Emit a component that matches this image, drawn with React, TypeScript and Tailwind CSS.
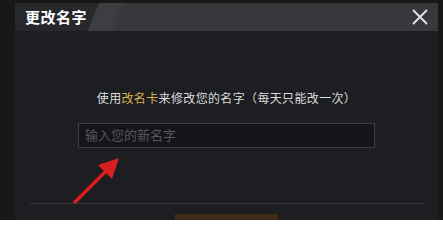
import React from "react";

const cjk = { fontFamily: '"Noto Sans CJK SC", "Noto Sans", sans-serif' };

export default function App() {
  return (
    <div className="relative w-[443px] h-[220px] overflow-hidden bg-[#181818]" style={cjk}>
      <div className="ml-[15px] mt-[3px] w-[423px] h-[240px] flex flex-col bg-[#1d1e22]">
        {/* header */}
        <div className="h-[29px] flex items-center justify-between pl-[10px] pr-[10px] bg-[linear-gradient(112deg,#26282c_0px,#26282c_78px,#3c3e42_78px,#3c3e42_100px,#36383c_100px)]">
          <span className="text-[15px] font-bold text-white tracking-[0.5px]">更改名字</span>
          <svg width="16" height="16" viewBox="0 0 16 16" className="text-[#e6e6e6]">
            <path d="M1.5 1.5L14.5 14.5M14.5 1.5L1.5 14.5" stroke="currentColor" strokeWidth="1.8" strokeLinecap="round" />
          </svg>
        </div>

        {/* body */}
        <div className="flex flex-col items-center pt-[59px]">
          <p className="text-[12px] leading-[16px] text-[#dcdcdc] tracking-[0.35px]">
            使用<span className="text-[#d9b24c]">改名卡</span>来修改您的名字（每天只能改一次）
          </p>
          <div className="mt-[17px] w-[297px] h-[25px] flex items-center px-[6px] bg-[#141519] border border-[#3d3e42]">
            <span className="text-[13px] text-[#55575b]">输入您的新名字</span>
          </div>
        </div>

        <div className="mt-[55px] mx-[15px] h-[2px] bg-[#34363a]" />
        <div className="mt-[10px] self-center w-[103px] h-[30px] bg-[#3e2b18]" />
      </div>

      {/* red annotation arrow */}
      <svg className="absolute left-0 top-0" width="443" height="220" viewBox="0 0 443 220">
        <line x1="75" y1="202" x2="109" y2="168" stroke="#d81e1e" strokeWidth="3.5" strokeLinecap="round" />
        <polygon points="119,158 98,165 112,179" fill="#d81e1e" />
      </svg>
    </div>
  );
}
